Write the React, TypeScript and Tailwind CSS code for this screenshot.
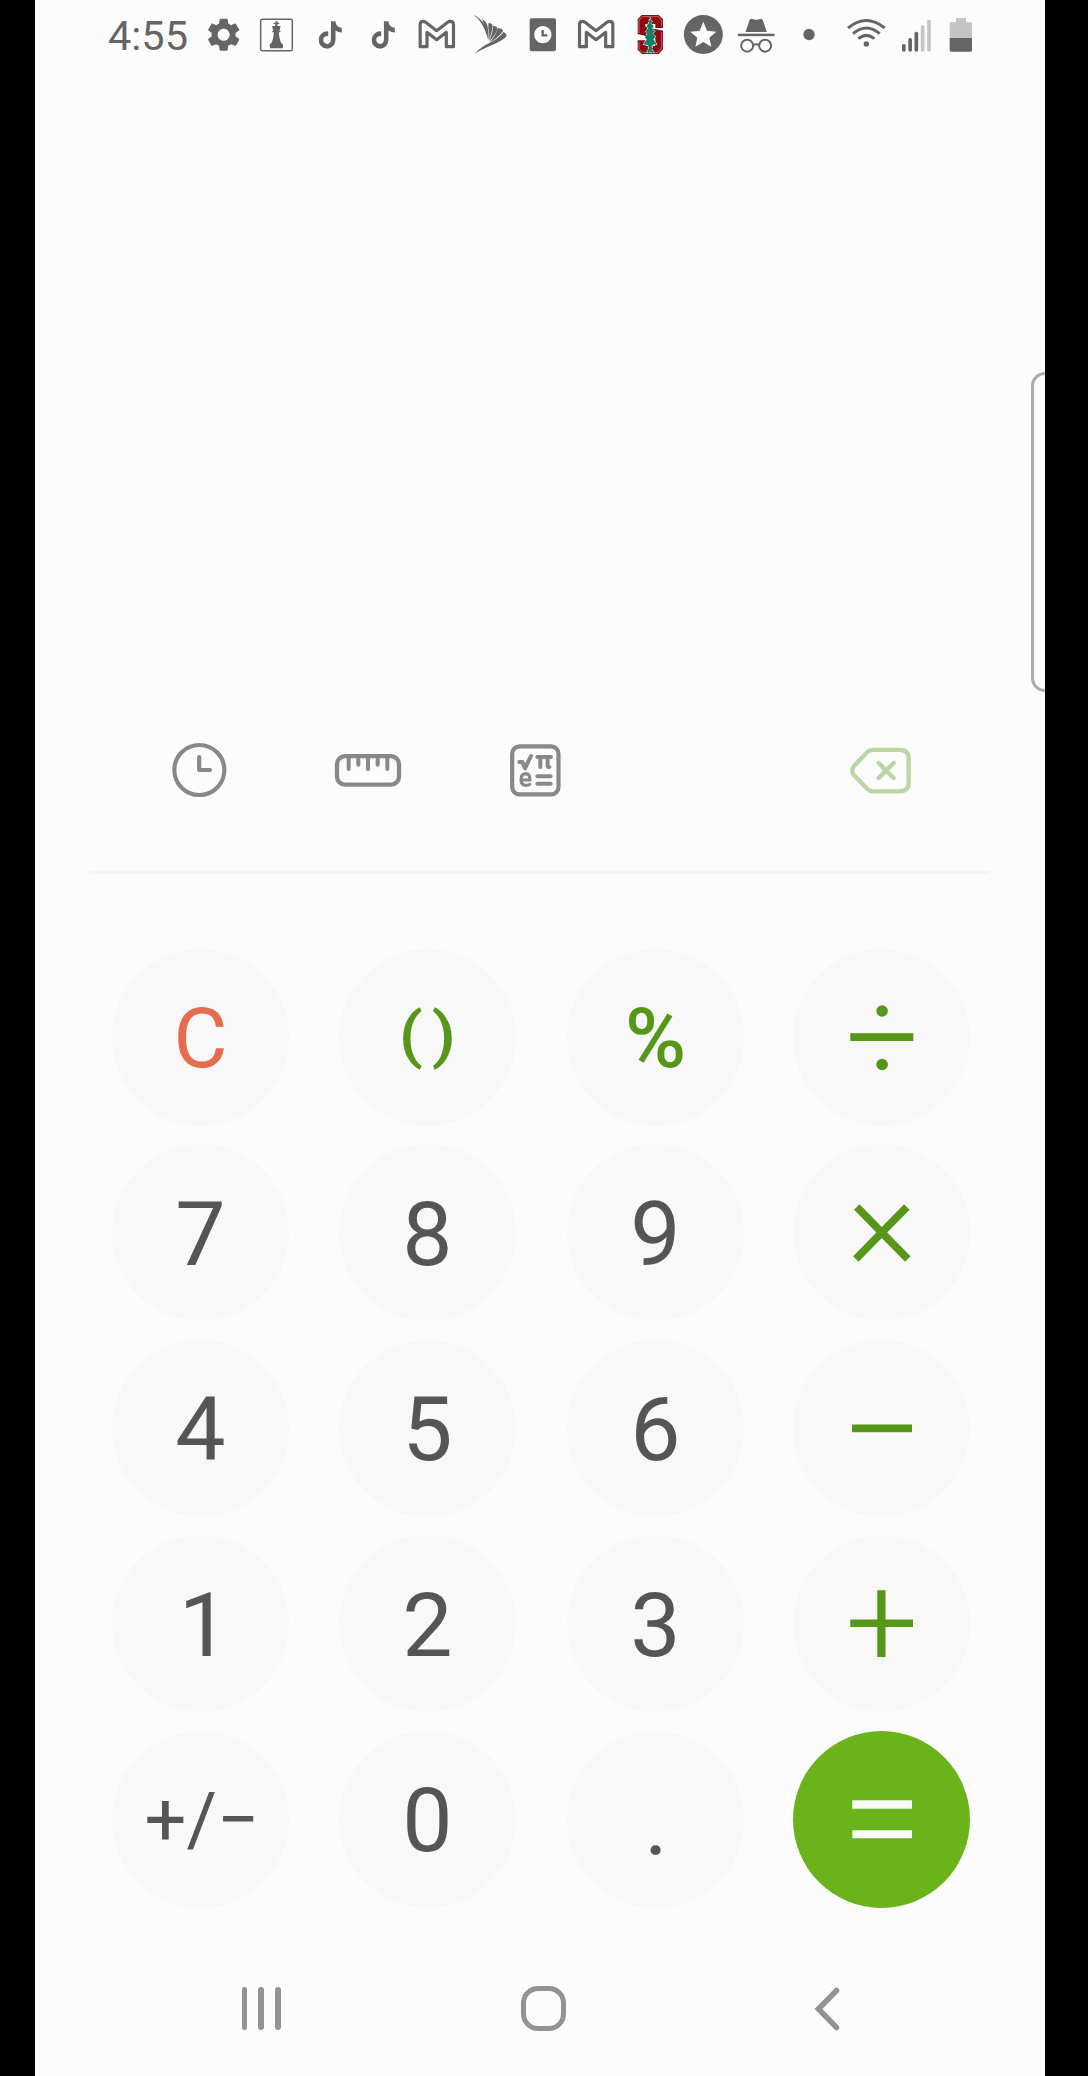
import type { ReactNode } from "react";

function StatusSlot({ x, children }: { x: number; children: ReactNode }) {
  return (
    <svg className="h-[70px] w-[53.25px] shrink-0 fill-[#656565]" viewBox={`${x} 0 159.75 210`}>
      {children}
    </svg>
  );
}

function Mail() {
  return (
    <path
      d="M59.500 140V74Q59.500 64 68 64Q72 64 76 67L109 92L142 67Q146 64 150 64Q159.500 64 159.500 74V140H138V97L109 119L80 97V140Z"
      fill="none"
      stroke="#656565"
      strokeWidth="9.500"
      strokeLinejoin="round"
    />
  );
}

function MusicNote() {
  return (
    <path d="M448,209.91a210.06,210.06,0,0,1-122.77-39.25V349.38A162.55,162.55,0,1,1,185,188.31V278.2a74.62,74.62,0,1,0,52.23,71.18V0l88,0a121.18,121.18,0,0,0,1.86,22.17h0A122.18,122.18,0,0,0,381,102.39a121.43,121.43,0,0,0,67,20.14Z" />
  );
}

const GEAR =
  "M19.14 12.94c.04-.3.06-.61.06-.94 0-.32-.02-.64-.07-.94l2.03-1.58c.18-.14.23-.41.12-.61l-1.92-3.32c-.12-.22-.37-.29-.59-.22l-2.39.96c-.5-.38-1.03-.7-1.62-.94l-.36-2.54c-.04-.24-.24-.41-.48-.41h-3.84c-.24 0-.43.17-.47.41l-.36 2.54c-.59.24-1.13.57-1.62.94l-2.39-.96c-.22-.08-.47 0-.59.22L2.74 8.87c-.12.21-.08.47.12.61l2.03 1.58c-.05.3-.09.63-.09.94s.02.64.07.94l-2.03 1.58c-.18.14-.23.41-.12.61l1.92 3.32c.12.22.37.29.59.22l2.39-.96c.5.38 1.03.7 1.62.94l.36 2.54c.05.24.24.41.48.41h3.84c.24 0 .44-.17.47-.41l.36-2.54c.59-.24 1.13-.56 1.62-.94l2.39.96c.22.08.47 0 .59-.22l1.92-3.32c.12-.22.07-.47-.12-.61l-2.01-1.58zM12 15.6c-1.98 0-3.6-1.62-3.6-3.6s1.62-3.6 3.6-3.6 3.6 1.62 3.6 3.6-1.62 3.6-3.6 3.6z";

function StatusBar() {
  return (
    <div className="flex h-[70px] items-center pl-[73px] text-[#656565]">
      <div className="w-[88.5px] shrink-0 whitespace-nowrap pt-px text-[41.5px] leading-none">4:55</div>
      <StatusSlot x={320}>
        <path d={GEAR} transform="translate(340 44) scale(5)" />
      </StatusSlot>
      <StatusSlot x={480}>
        <rect x="512" y="57.500" width="95" height="94.500" rx="5" fill="none" stroke="#656565" strokeWidth="4.500" />
        <path d="M557.500 64h5v4h5v4h-5v6h9l-3 15h3v4h-5c1 14 3 22 6 30l7 8v3h-41v-3l7-8c3-8 5-16 6-30h-5v-4h3l-3-15h9v-6h-5v-4h5zM540 138h39v7h-39z" />
      </StatusSlot>
      <StatusSlot x={640}>
        <g transform="translate(687 64) scale(0.155 0.16)">
          <MusicNote />
        </g>
      </StatusSlot>
      <StatusSlot x={800}>
        <g transform="translate(847 64) scale(0.155 0.16)">
          <MusicNote />
        </g>
      </StatusSlot>
      <StatusSlot x={29}>
        <Mail />
      </StatusSlot>
      <StatusSlot x={189}>
        <path d="M221 45Q239 52 250 69Q263 88 265 122Q255 84 241 65Q234 54 221 45Z" />
        <path d="M246 57Q258 64 262 75Q267 94 266 121Q260 93 253 77Z" />
        <path d="M265 69Q279 70 278 80Q275 98 267 122Q269 98 265 86Z" />
        <path d="M280 77Q294 79 293 87Q288 102 268 125Q278 98 280 77Z" />
        <path d="M295 84Q308 86 309 93Q304 104 269 129Q286 108 295 84Z" />
        <path d="M311 96Q323 104 318 111Q308 121 275 136Q243 149 224 162Q244 139 268 129Q294 117 311 96Z" />
      </StatusSlot>
      <StatusSlot x={349}>
        <path
          fillRule="evenodd"
          d="M396 55H463Q469 55 469 61V148Q469 154 463 154H396Q390 154 390 148V61Q390 55 396 55ZM429.500 78a26 26 0 1 0 .1 0Z"
        />
        <path d="M429 90V106H443" fill="none" stroke="#656565" strokeWidth="7" />
      </StatusSlot>
      <StatusSlot x={508}>
        <g transform="translate(480 0)">
          <Mail />
        </g>
      </StatusSlot>
      <StatusSlot x={668}>
        <path
          d="M724 45H775L788 58V84H765V72H735V80L788 92V148L775 162H725L712 149V121H735V137H765V115L712 102V58Z"
          fill="#8f0a10"
        />
        <path
          d="M726 50H773L784 60V79M716 99V60L726 50M784 96V146L773 157H727L716 147V126"
          fill="none"
          stroke="#e8c0c0"
          strokeWidth="1.500"
        />
        <path
          d="M749 52L756 65L753 70L761 79L756 84L765 94L758 100L767 111L760 117L770 133L756 136V148L762 158H738L744 148V137L728 133L738 119L733 112L740 101L735 96L742 84L738 78L744 70Z"
          fill="#14806a"
          stroke="#f5f0e8"
          strokeWidth="2.500"
          strokeDasharray="7 3"
        />
      </StatusSlot>
      <StatusSlot x={828}>
        <circle cx="910" cy="103.500" r="58.500" />
        <path d="M910 65L921 92L949 95L928 113L934 140L910 126L886 140L892 113L871 95L899 92Z" fill="#fcfcfc" />
      </StatusSlot>
      <StatusSlot x={147.5}>
        <path d="M197 96L209 61Q211 55 217 57Q229 62 241 57Q247 55 249 61L261 96Z" />
        <rect x="174" y="101" width="110" height="7.500" />
        <g fill="none" stroke="#656565" strokeWidth="6">
          <circle cx="202" cy="137" r="18" />
          <circle cx="256" cy="137" r="18" />
          <path d="M219 136Q229 130 239 136" />
        </g>
      </StatusSlot>
      <StatusSlot x={307}>
        <circle cx="388" cy="103.500" r="17" />
      </StatusSlot>
      <svg className="ml-[9.500px] h-[70px] w-[130px] shrink-0" viewBox="495 0 390 210">
        <g fill="none" stroke="#656565" strokeWidth="9">
          <path d="M504 84Q559 39 614 84" />
          <path d="M519 101Q559 67 599 101" />
          <path d="M535 116Q559 96 583 116" />
        </g>
        <circle cx="559" cy="132" r="8" fill="#656565" />
        <g fill="#656565">
          <rect x="666" y="132" width="11" height="23" rx="5" />
          <rect x="685" y="114" width="11" height="41" rx="5" />
          <rect x="703.500" y="95" width="11" height="60" rx="5" />
        </g>
        <g fill="#c4c4c4">
          <rect x="722.500" y="76" width="11" height="79" rx="5" />
          <rect x="741.500" y="59" width="11" height="96" rx="5" />
          <path d="M828 54H858V67H873Q876 67 876 70V115H809V70Q809 67 812 67H828Z" />
        </g>
        <path d="M809 114H876V151Q876 155 872 155H813Q809 155 809 151Z" fill="#656565" />
      </svg>
    </div>
  );
}

function Toolbar() {
  return (
    <div className="flex h-[100px] pl-[130px] pr-[130px]">
      <svg
        className="w-[70px]"
        viewBox="45 0 210 300"
        fill="none"
        stroke="#888888"
        strokeWidth="12.500"
        strokeLinecap="round"
        strokeLinejoin="round"
        aria-label="History"
      >
        <circle cx="148" cy="150" r="75" />
        <path d="M147.500 111V150H180" />
      </svg>
      <svg className="ml-[95px] w-[75px]" viewBox="540 0 225 300" fill="none" stroke="#888888" strokeWidth="13" aria-label="Unit converter">
        <rect x="561" y="108.500" width="186" height="85.500" rx="24" />
        <path d="M596 112V147M625 112V134M654 112V147M683 112V134M712 112V147" strokeLinecap="round" strokeWidth="12" />
      </svg>
      <svg
        className="ml-[100px] w-[60px]"
        viewBox="1065 0 180 300"
        fill="none"
        stroke="#888888"
        strokeWidth="12"
        strokeLinecap="round"
        strokeLinejoin="round"
        aria-label="Scientific mode"
      >
        <rect x="1086.500" y="79" width="139" height="144" rx="22" strokeWidth="12.500" />
        <path d="M1108 126H1117L1125 145L1143 108" />
        <path d="M1162 111H1203M1171 112V141M1193 112V136Q1193 142 1198 141" />
        <path d="M1162 169H1202M1162 191H1202" />
        <path d="M1114 180H1140Q1140 161 1127 161Q1113 162 1113 179Q1113 196 1128 196Q1136 196 1139 193" strokeWidth="9.500" />
      </svg>
      <svg
        className="ml-auto w-[70px]"
        viewBox="75 0 210 300"
        fill="none"
        stroke="#bbd5a3"
        strokeWidth="13"
        strokeLinecap="round"
        strokeLinejoin="round"
        aria-label="Backspace"
      >
        <path d="M158 89.500H239Q266 89.500 266 116V187Q266 214 239 214H158Q149 214 142 207L102 166Q91 152 102 138L142 96Q149 89.500 158 89.500Z" />
        <path d="M176 129L221 174M221 129L176 174" />
      </svg>
    </div>
  );
}

function Op({ label, children }: { label: string; children: ReactNode }) {
  return (
    <svg className="size-[177px]" viewBox="-88.5 -88.5 177 177" fill="#569719" aria-label={label}>
      {children}
    </svg>
  );
}

function Key({ children, accent }: { children: ReactNode; accent?: boolean }) {
  return (
    <button
      className={
        "flex size-[177px] items-center justify-center rounded-full text-[89.5px] leading-none " +
        (accent ? "bg-[#6ab31b] text-white" : "bg-[#f8f8f8] text-[#555555]")
      }
    >
      {children}
    </button>
  );
}

function Digit({ n }: { n: string }) {
  return (
    <Key>
      <span className={n === "1" ? "pl-[7px] pt-[4px]" : "pt-[3.5px]"}>{n}</span>
    </Key>
  );
}

function Keypad() {
  return (
    <div className="grid grid-cols-[227px_228px_226px_177px] gap-y-[18.4px] pl-[77px]">
      <Key>
        <span className="pt-[1px] text-[83px] text-[#e56c4d]">C</span>
      </Key>
      <Key>
        <span className="flex scale-x-[1.13] gap-[8px] pb-[4px] text-[61.5px] font-medium text-[#569719]">
          <span>(</span>
          <span>)</span>
        </span>
      </Key>
      <Key>
        <span className="pt-[2px] text-[83px] font-medium text-[#569719]">%</span>
      </Key>
      <Key>
        <Op label="Divide">
          <rect x="-31.200" y="-4.300" width="63" height="7.800" />
          <circle cx="0.600" cy="-26.500" r="5.800" />
          <circle cx="0.600" cy="27" r="5.800" />
        </Op>
      </Key>
      <Digit n="7" />
      <Digit n="8" />
      <Digit n="9" />
      <Key>
        <Op label="Multiply">
          <path d="M-24.700 -25.500L26.300 26.500M25.300 -25.500L-25.700 26.500" stroke="#569719" strokeWidth="7.600" />
        </Op>
      </Key>
      <Digit n="4" />
      <Digit n="5" />
      <Digit n="6" />
      <Key>
        <Op label="Minus">
          <rect x="-29.500" y="-4" width="60" height="7.700" />
        </Op>
      </Key>
      <Digit n="1" />
      <Digit n="2" />
      <Digit n="3" />
      <Key>
        <Op label="Plus">
          <path d="M-31.200 -3.900H-4.200V-33.200H4V-3.900H31.500V3.500H4V33.500H-4.200V3.500H-31.200Z" />
        </Op>
      </Key>
      <Key>
        <span className="pl-[3px] pt-[1px] text-[74px]">+/−</span>
      </Key>
      <Digit n="0" />
      <Key>
        <span className="pl-[1px] pt-[10px]">.</span>
      </Key>
      <Key accent>
        <Op label="Equals">
          <path d="M-29.200 -19.200H30.500V-10.700H-29.200ZM-29.200 10.700H30.500V18.700H-29.200Z" fill="#f8fbf5" />
        </Op>
      </Key>
    </div>
  );
}

function NavBar() {
  return (
    <div className="flex h-[60px] items-center pl-[196px] pr-[203px] text-[#939393]">
      <div className="mx-[10.500px] flex gap-[11px]">
        <span className="h-[42.500px] w-[5.800px] rounded-full bg-current" />
        <span className="h-[42.500px] w-[5.800px] rounded-full bg-current" />
        <span className="h-[42.500px] w-[5.800px] rounded-full bg-current" />
      </div>
      <div className="ml-[229.500px] size-[45.500px] rounded-[17px] border-[5.800px] border-current" />
      <svg className="ml-auto h-[46px] w-[30px]" viewBox="0 0 30 46" fill="none" stroke="currentColor" strokeWidth="5.500" strokeLinecap="round">
        <path d="M24.500 4.500L6.500 23L24.500 41.500" />
      </svg>
    </div>
  );
}

export default function App() {
  return (
    <div className="flex h-[2076px] w-[1088px] justify-start overflow-hidden bg-black pl-[35px] font-[Roboto,sans-serif]">
      <div className="relative flex h-full w-[1010px] flex-col overflow-hidden bg-[#fcfcfc]">
        <StatusBar />
        <div className="h-[650px]" />
        <div className="absolute right-0 top-[372px] h-[320px] w-[14px] rounded-l-[14px] border-[3px] border-r-0 border-[#acacac] bg-[#fdfdfd]" />
        <Toolbar />
        <div className="ml-[54px] mt-[51px] h-[3px] w-[901px] shrink-0 bg-[#f5f5f5]" />
        <div className="h-[75px] shrink-0" />
        <Keypad />
        <div className="h-[71px] shrink-0" />
        <NavBar />
      </div>
    </div>
  );
}
